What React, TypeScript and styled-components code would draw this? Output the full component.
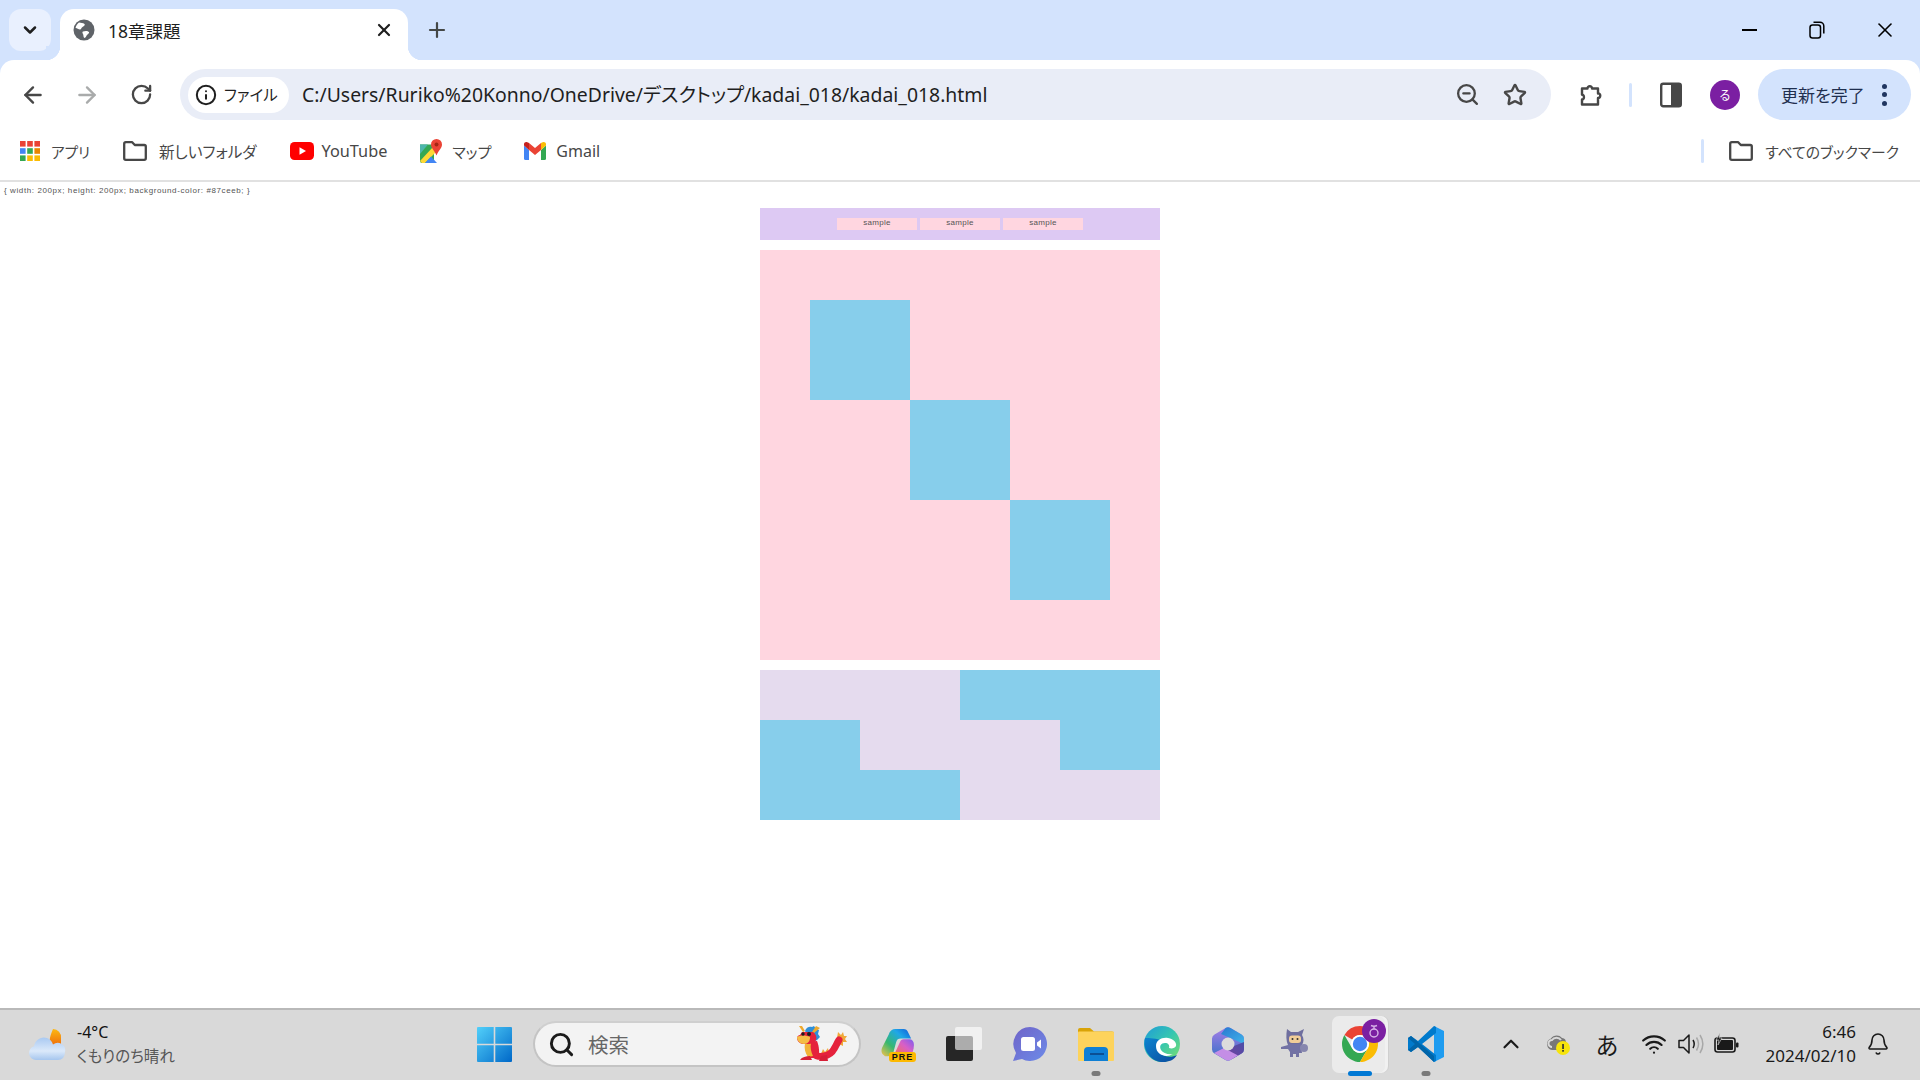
import React from 'react'
import styled, { createGlobalStyle } from 'styled-components'
import {
    ArrowLeft,
    ArrowRight,
    Bell,
    ChevronDown,
    ChevronUp,
    Info,
    Plus,
    RotateCw,
    Search,
    Star,
    Wifi,
    X,
    ZoomOut,
} from 'lucide-react'

const UI_FONT = `"Noto Sans", "Noto Sans CJK JP", sans-serif`

const GlobalStyle = createGlobalStyle`
    html, body {
        margin: 0;
        padding: 0;
        background: #ffffff;
    }
    * {
        box-sizing: border-box;
    }
`

const Screen = styled.div`
    width: 1920px;
    height: 1080px;
    display: flex;
    flex-direction: column;
    overflow: hidden;
    background: #d3e3fd;
    font-family: ${UI_FONT};
    font-feature-settings: 'palt';
`

/* ---------- tab strip ---------- */

const TabStrip = styled.div`
    height: 60px;
    display: flex;
    align-items: flex-end;
    padding-left: 9px;
    flex-shrink: 0;
`

const TabSearchButton = styled.div`
    width: 42px;
    height: 42px;
    margin-bottom: 9px;
    border-radius: 12px;
    background: #e9f0fe;
    display: flex;
    align-items: center;
    justify-content: center;
    color: #1f1f1f;
`

const Tab = styled.div`
    position: relative;
    width: 348px;
    height: 51px;
    margin-left: 9px;
    padding: 0 14px 9px 13px;
    display: flex;
    align-items: center;
    background: #ffffff;
    border-radius: 14px 14px 0 0;

    &::before,
    &::after {
        content: '';
        position: absolute;
        bottom: 0;
        width: 14px;
        height: 14px;
    }
    &::before {
        left: -14px;
        background: radial-gradient(circle at 0 0, #d3e3fd 14px, #ffffff 14.5px);
    }
    &::after {
        right: -14px;
        background: radial-gradient(circle at 100% 0, #d3e3fd 14px, #ffffff 14.5px);
    }
`

const TabTitle = styled.span`
    margin-left: 13px;
    flex: 1;
    font-size: 17.5px;
    color: #1f1f1f;
`

const NewTab = styled.div`
    width: 44px;
    height: 42px;
    margin: 0 0 9px 7px;
    display: flex;
    align-items: center;
    justify-content: center;
    color: #444746;
`

const WindowControls = styled.div`
    margin-left: auto;
    align-self: stretch;
    display: flex;
    padding-right: 1px;
`

const WindowButton = styled.div`
    width: 68px;
    display: flex;
    align-items: center;
    justify-content: center;
    color: #000000;
`

const MinimizeBar = styled.div`
    width: 15px;
    height: 2px;
    background: #000000;
`

/* ---------- toolbar ---------- */

const Toolbar = styled.div`
    height: 69px;
    flex-shrink: 0;
    display: flex;
    align-items: center;
    padding: 0 9px 0 6px;
    background: #ffffff;
    border-radius: 14px 14px 0 0;
`

const NavSlot = styled.div<{ $muted?: boolean }>`
    width: 54px;
    height: 42px;
    display: flex;
    align-items: center;
    justify-content: center;
    color: ${(p) => (p.$muted ? '#a9abab' : '#474747')};
`

const AddressBar = styled.div`
    width: 1371px;
    height: 51px;
    margin-left: 12px;
    padding: 0 12px 0 8px;
    display: flex;
    align-items: center;
    border-radius: 26px;
    background: #e9edf7;
`

const SecurityChip = styled.div`
    width: 101px;
    height: 36px;
    padding-left: 7px;
    display: flex;
    align-items: center;
    gap: 7px;
    border-radius: 18px;
    background: #ffffff;
    font-size: 15.5px;
    color: #1f1f1f;
`

const UrlText = styled.span`
    margin-left: 13px;
    padding-bottom: 2px;
    flex: 1;
    font-size: 19.4px;
    color: #1f1f1f;
    white-space: nowrap;
`

const OmniboxAction = styled.div`
    width: 48px;
    display: flex;
    justify-content: center;
    color: #474747;
`

const ToolSlot = styled.div<{ $gap: number }>`
    width: 42px;
    margin-left: ${(p) => p.$gap}px;
    display: flex;
    justify-content: center;
    color: #474747;
`

const ToolDivider = styled.div`
    width: 3px;
    height: 24px;
    margin-left: 17px;
    border-radius: 2px;
    background: #d3e3fd;
`

const Avatar = styled.div`
    width: 30px;
    height: 30px;
    margin-left: 18px;
    border-radius: 50%;
    display: flex;
    align-items: center;
    justify-content: center;
    background: #7b1fa2;
    color: #ffffff;
    font-size: 12px;
`

const UpdateButton = styled.div`
    width: 153px;
    height: 51px;
    margin-left: 18px;
    padding-left: 23px;
    display: flex;
    align-items: center;
    gap: 17px;
    border-radius: 26px;
    background: #d3e3fd;
    color: #1f2f4f;
    font-size: 17px;
`

const Dots = styled.div`
    display: flex;
    flex-direction: column;
    gap: 3.5px;

    i {
        display: block;
        width: 5px;
        height: 5px;
        border-radius: 50%;
        background: #1f3560;
    }
`

/* ---------- bookmarks ---------- */

const BookmarksBar = styled.div`
    height: 53px;
    flex-shrink: 0;
    display: flex;
    align-items: flex-start;
    gap: 33px;
    padding: 10px 21px 0 20px;
    background: #ffffff;
    border-bottom: 2px solid #e1e1e1;
`

const Bookmark = styled.div<{ $size?: number; $iconGap?: number }>`
    height: 24px;
    display: flex;
    align-items: center;
    gap: ${(p) => p.$iconGap ?? 10}px;
    font-size: ${(p) => p.$size ?? 16}px;
    color: #474747;
    white-space: nowrap;
`

const BookmarkDivider = styled.div`
    width: 3px;
    height: 24px;
    margin-left: auto;
    border-radius: 2px;
    background: #d3e3fd;
`

const AllBookmarks = styled(Bookmark)`
    margin-left: -8px;
`

/* ---------- page under test (rendered at 50% zoom) ---------- */

const Page = styled.div`
    flex: 1;
    background: #ffffff;
    padding: 0 4px;
    font-family: 'Liberation Sans', Arial, sans-serif;
    font-feature-settings: normal;
`

const CodeLine = styled.p`
    margin: 4px 0 12px;
    height: 10px;
    font-size: 8px;
    line-height: 10px;
    letter-spacing: 0.6px;
    color: #555555;
`

const Column = styled.div`
    width: 400px;
    margin: 0 auto;
    display: flex;
    flex-direction: column;
    gap: 10px;
`

const Header = styled.div`
    height: 32px;
    display: flex;
    align-items: center;
    justify-content: center;
    gap: 3px;
    background: #ddc9f3;
`

const HeaderItem = styled.div`
    width: 80px;
    height: 12px;
    background: #ffd6e0;
    text-align: center;
    font-size: 8px;
    line-height: 10px;
    letter-spacing: 0.3px;
    color: #555555;
`

const Stage = styled.div`
    height: 410px;
    padding: 50px;
    display: grid;
    grid-template-columns: repeat(3, 100px);
    grid-template-rows: repeat(3, 100px);
    background: #ffd6e0;
`

const StageBox = styled.div<{ $at: number }>`
    grid-column: ${(p) => p.$at};
    grid-row: ${(p) => p.$at};
    background: #87ceeb;
`

const Pattern = styled.div`
    height: 150px;
    display: grid;
    grid-template-columns: repeat(4, 100px);
    grid-template-rows: repeat(3, 50px);
    background: #e5dbee;
`

const PatternBlock = styled.div<{ $col: string; $row: number }>`
    grid-column: ${(p) => p.$col};
    grid-row: ${(p) => p.$row};
    background: #87ceeb;
`

/* ---------- taskbar ---------- */

const Taskbar = styled.div`
    height: 72px;
    flex-shrink: 0;
    display: flex;
    align-items: center;
    padding: 0 0 2px 29px;
    background: #d9d9d9;
    border-top: 2px solid #b9b9b9;
`

const Weather = styled.div`
    width: 448px;
    display: flex;
    align-items: center;
    gap: 11px;
`

const WeatherText = styled.div`
    display: flex;
    flex-direction: column;
    line-height: 24px;
`

const Temperature = styled.span`
    font-size: 16px;
    color: #111111;
`

const Condition = styled.span`
    font-size: 15.5px;
    color: #555555;
`

const SearchPill = styled.div`
    width: 328px;
    height: 46px;
    margin-left: 21px;
    padding: 0 12px 0 13px;
    display: flex;
    align-items: center;
    border-radius: 23px;
    background: #f3f3f3;
    border: 2px solid #c4c4c4;
    border-top-color: #cfcfcf;
    color: #1b1b1b;
`

const SearchLabel = styled.span`
    margin-left: 13px;
    flex: 1;
    font-size: 20.5px;
    color: #666666;
`

const Apps = styled.div`
    margin-left: 4px;
    display: flex;
    align-self: stretch;
`

const AppSlot = styled.div`
    position: relative;
    isolation: isolate;
    width: 66px;
    display: flex;
    align-items: center;
    justify-content: center;
`

const ChromeTile = styled.div`
    position: absolute;
    z-index: -1;
    top: 6px;
    left: 5px;
    width: 53px;
    height: 57px;
    border-radius: 7px;
    background: #ebebeb;
    box-shadow: 3px 0 0 0 #f1f1f1, 4px 0 0 0 #cfcfcf;
`

const RunningDot = styled.div<{ $active?: boolean }>`
    position: absolute;
    bottom: 2px;
    left: 50%;
    transform: translateX(-50%);
    height: 5px;
    width: ${(p) => (p.$active ? 24 : 9)}px;
    border-radius: 3px;
    background: ${(p) => (p.$active ? '#0078d4' : '#7a7a7a')};
`

const ChromeBadge = styled.div`
    position: absolute;
    top: 9px;
    left: 35px;
    width: 24px;
    height: 24px;
    border-radius: 50%;
    background: #7b1fa2;
    display: flex;
    align-items: center;
    justify-content: center;
`

const PreBadge = styled.span`
    position: absolute;
    left: 24px;
    top: 42px;
    width: 27px;
    height: 10px;
    border-radius: 3px;
    background: #fdb900;
    color: #111111;
    font-family: 'Liberation Sans', Arial, sans-serif;
    font-size: 9px;
    font-weight: 700;
    letter-spacing: 1px;
    line-height: 10px;
    text-align: center;
`

const Tray = styled.div`
    margin-left: auto;
    display: flex;
    align-items: center;
    padding-right: 20px;
    color: #1a1a1a;
`

const TrayIcon = styled.div<{ $width: number }>`
    width: ${(p) => p.$width}px;
    display: flex;
    align-items: center;
    justify-content: center;
    font-size: 23px;
`

const Clock = styled.div`
    width: 109px;
    text-align: right;
    font-size: 17px;
    line-height: 24px;
    color: #1a1a1a;
`

const BellSlot = styled.div`
    width: 44px;
    display: flex;
    justify-content: center;
`

/* ---------- drawings ---------- */

const GlobeIcon = () => (
    <svg width="22" height="22" viewBox="0 0 22 22">
        <circle cx="11" cy="11" r="10.5" fill="#5f6368" />
        <path d="M6 3.5c2 .6 4 .2 5.5 1.5 1 1-1 2.5-2 3-1.500.7-1 2.500-2.500 2.500-1.500 0-3-1.500-4.500-1.800C3 6.800 4.500 4.500 6 3.500z" fill="#fff" />
        <path d="M10 12.500c2-.8 5-.8 6 .6 .6 1-1 2-2 3-.8.9-1 2.800-2.500 2.900-1 0-1-2.500-1.300-3.500-.3-1-1.500-2.300-.2-3z" fill="#fff" />
    </svg>
)

const ExtensionIcon = () => (
    <svg width="26" height="26" viewBox="0 0 26 26" fill="none" stroke="#474747" strokeWidth="2.4" strokeLinejoin="round">
        <path d="M4 6.500h5.500c-.4-3 5-3 4.500 0H20v5c3-.4 3 4.500 0 4.500v6.500H4v-5c2.600.3 2.600-5 0-4.800z" />
    </svg>
)

const SidePanelIcon = () => (
    <svg width="22" height="26" viewBox="0 0 22 26">
        <rect x="1.2" y="1.7" width="19.6" height="22.6" rx="2" fill="#fff" stroke="#474747" strokeWidth="2.4" />
        <rect x="11" y="1.7" width="10" height="22.6" rx="1" fill="#474747" />
    </svg>
)

const RestoreIcon = () => (
    <svg width="16" height="18" viewBox="0 0 16 18" fill="none" stroke="#000" strokeWidth="1.5">
        <rect x="1" y="4" width="10.5" height="13" rx="2.5" />
        <path d="M4.500 1.200h6.500c2 0 3.800 1.600 3.800 3.800v7.500" />
    </svg>
)

const AppsGridIcon = () => {
    const colors = ['#ea4335', '#ea4335', '#ea4335', '#4285f4', '#34a853', '#ea8600', '#34a853', '#fbbc04', '#fbbc04']
    return (
        <svg width="20" height="20" viewBox="0 0 20 20">
            {colors.map((c, i) => (
                <rect key={i} x={(i % 3) * 7.2} y={Math.floor(i / 3) * 7.2} width="5.6" height="5.6" fill={c} />
            ))}
        </svg>
    )
}

const FolderIcon = () => (
    <svg width="24" height="20" viewBox="0 0 24 20" fill="none" stroke="#474747" strokeWidth="2.3" strokeLinejoin="round">
        <path d="M2.800 1.200h6.400l2.600 2.800h9.400c.9 0 1.600.7 1.600 1.600v11.600c0 .9-.7 1.600-1.600 1.600H2.800c-.9 0-1.600-.7-1.600-1.600V2.800c0-.9.7-1.600 1.600-1.600z" />
    </svg>
)

const YouTubeIcon = () => (
    <svg width="24" height="18" viewBox="0 0 24 18">
        <rect width="24" height="18" rx="4.5" fill="#f00" />
        <path d="M9.500 5.200l6.500 3.800-6.500 3.800z" fill="#fff" />
    </svg>
)

const MapsIcon = () => (
    <svg width="22" height="24" viewBox="0 0 22 24">
        <path d="M0 5.500h14V24H2a2 2 0 0 1-2-2z" fill="#34a853" />
        <path d="M0 5.500h8L0 15z" fill="#4db6ac" />
        <path d="M0 22L13 8l4 4-12 12H2z" fill="#fdd835" />
        <path d="M5 24l6-6.500L17 24z" fill="#4285f4" />
        <path d="M16.500 0a5.500 5.500 0 0 1 5.500 5.500c0 4-4 6.500-5.500 11-1.500-4.500-5.500-7-5.500-11A5.500 5.500 0 0 1 16.500 0z" fill="#ea4335" />
        <circle cx="16.5" cy="5.5" r="2" fill="#a52714" />
    </svg>
)

const GmailIcon = () => (
    <svg width="22" height="18" viewBox="0 0 22 18">
        <path d="M0 3.500V16.500A1.500 1.500 0 0 0 1.500 18H5V8z" fill="#4285f4" />
        <path d="M17 8V18h3.500a1.500 1.500 0 0 0 1.500-1.500V3.500z" fill="#34a853" />
        <path d="M17 1v7l5-4.500V2C22 .2 19.500-.6 18 .5z" fill="#fbbc04" />
        <path d="M5 8V1l6 5 6-5v7l-6 5z" fill="#ea4335" />
        <path d="M0 2v1.500L5 8V1L4 .5C2.500-.6 0 .2 0 2z" fill="#c5221f" />
    </svg>
)

const WeatherIcon = () => (
    <svg width="37" height="36" viewBox="0 0 37 36">
        <defs>
            <linearGradient id="wxSun" x1="0" y1="0" x2="0" y2="1">
                <stop offset="0" stopColor="#fcb813" />
                <stop offset="1" stopColor="#ee6c0c" />
            </linearGradient>
            <linearGradient id="wxCloud" x1="0" y1="0" x2="0" y2="1">
                <stop offset="0" stopColor="#a9c9f2" />
                <stop offset="0.6" stopColor="#dbe9fa" />
                <stop offset="1" stopColor="#a6c6ee" />
            </linearGradient>
        </defs>
        <path d="M24 3a8 8 0 0 1 8 9v8H22c-2-3-2-8 2-17z" fill="url(#wxSun)" />
        <path d="M7 34a7 7 0 0 1-2-13.700C6 14 12 10 18 12c3 1 5 3.500 6 6.500A7.500 7.500 0 0 1 36 26c0 5-3 8-7 8z" fill="url(#wxCloud)" />
    </svg>
)

const WindowsLogo = () => (
    <svg width="35" height="35" viewBox="0 0 35 35">
        <defs>
            <linearGradient id="winLogo" x1="0" y1="0" x2="1" y2="1">
                <stop offset="0" stopColor="#52d0fa" />
                <stop offset="1" stopColor="#0068c8" />
            </linearGradient>
        </defs>
        <path d="M1 0h15.700v16.700H0V1a1 1 0 0 1 1-1zM18.300 0H34a1 1 0 0 1 1 1v15.700H18.300zM0 18.300h16.700V35H1a1 1 0 0 1-1-1zM18.300 18.300H35V34a1 1 0 0 1-1 1H18.300z" fill="url(#winLogo)" />
    </svg>
)

const DragonIcon = () => (
    <svg width="50" height="36" viewBox="0 0 50 36">
        {/* gold fins along the tail */}
        <path d="M40 12l1-6 3 3 2-3 1 4 3 0-2 3 2 3-4 0 0 4-4-2z" fill="#f0a83a" />
        <path d="M24 28l2-5 2 3 3-4 1 5z" fill="#f0a83a" />
        {/* body and tail */}
        <path d="M14 24c2 6 8 7 13 6 5-1 8-3 10-7 2-3 3-6 5-9" fill="none" stroke="#e5223c" strokeWidth="7" strokeLinecap="round" />
        <path d="M9 16c-1 6 0 12 4 16h8c2-5 1-12-1-17z" fill="#e5223c" />
        <path d="M8 17c-1 5 0 10 3 14l5-1c-2-4-3-9-2-13z" fill="#f2b338" />
        {/* feet */}
        <path d="M3 34c2-3 6-4 10-4l2 4zM22 35l2-5 6-1 1 6z" fill="#d61f36" />
        {/* mane and horns */}
        <path d="M8 5c1-4 5-5 7-4l2-1 2 3 3 1-1 4 2 3-3 3-4 2-5-6z" fill="#2f8fd8" />
        <path d="M2 0l4 6 2-1-3-5zM19 0l-4 6 2 1 6-5z" fill="#eda92e" />
        {/* head */}
        <path d="M5 6h11c3 2 4 5 3 8-1 3-4 4-8 4H5c-3-1-5-3-5-6 0-2 2-3 3-3z" fill="#e5223c" />
        <path d="M0 11c3-2 9-2 13 0 0 4-2 7-6 7s-7-3-7-7z" fill="#f4bd45" />
        <circle cx="12" cy="8" r="2" fill="#1e1e1e" />
        <circle cx="6" cy="8" r="1.700" fill="#1e1e1e" />
    </svg>
)

const CopilotIcon = () => (
    <svg width="34" height="30" viewBox="0 0 36 32">
        <defs>
            <linearGradient id="cpA" x1="0" y1="1" x2="1" y2="0">
                <stop offset="0" stopColor="#f7c14a" />
                <stop offset=".35" stopColor="#37b86f" />
                <stop offset=".7" stopColor="#1fa7e8" />
                <stop offset="1" stopColor="#1058d8" />
            </linearGradient>
            <linearGradient id="cpB" x1="0" y1="1" x2="1" y2="0">
                <stop offset="0" stopColor="#f2734f" />
                <stop offset=".55" stopColor="#d95fc6" />
                <stop offset="1" stopColor="#7a5cf0" />
            </linearGradient>
        </defs>
        <path d="M8 6c1-4 4-6 7-6h9c2 0 4 1 5 4l3 6H21c-3 0-4 1-5 4l-3 11c-1 3-3 4-6 4H4l-1-1C0 26 0 23 1 20z" fill="url(#cpA)" />
        <path d="M20 14c1-2 2-3 4-3h6c3 0 5 2 5 6 0 5-2 9-3 11H18c-2 0-3-1-3-3z" fill="url(#cpB)" />
    </svg>
)

const TaskViewIcon = () => (
    <svg width="36" height="34" viewBox="0 0 36 34">
        <rect x="0" y="9" width="27" height="25" rx="2" fill="#262626" />
        <rect x="9" y="0" width="27" height="23" rx="2" fill="#fff" fillOpacity=".62" />
    </svg>
)

const MeetIcon = () => (
    <svg width="34" height="34" viewBox="0 0 34 34">
        <defs>
            <linearGradient id="meet" x1="0" y1="0" x2="1" y2="1">
                <stop offset="0" stopColor="#6f63c8" />
                <stop offset="1" stopColor="#6d8be8" />
            </linearGradient>
        </defs>
        <path d="M17 0a17 17 0 1 1-8 32l-9 2 3-8A17 17 0 0 1 17 0z" fill="url(#meet)" />
        <rect x="8" y="10" width="14" height="14" rx="2.5" fill="#fff" />
        <path d="M24 15.500l4-3v9l-4-3z" fill="#fff" />
    </svg>
)

const ExplorerIcon = () => (
    <svg width="36" height="34" viewBox="0 0 36 34">
        <path d="M2 1h10l4 3.500h18a2 2 0 0 1 2 2V10H0V3a2 2 0 0 1 2-2z" fill="#d9a307" />
        <rect y="4.5" width="36" height="29.5" rx="1" fill="#fdd35c" />
        <path d="M6 34V24a4 4 0 0 1 4-4h16a4 4 0 0 1 4 4v10z" fill="#0f7fd4" />
        <rect x="12" y="26" width="14" height="2" fill="#0b4f94" />
    </svg>
)

const EdgeIcon = () => (
    <svg width="36" height="36" viewBox="0 0 36 36">
        <defs>
            <linearGradient id="edgeA" x1="0" y1="0" x2="1" y2="1">
                <stop offset="0" stopColor="#1f9cd8" />
                <stop offset=".5" stopColor="#35c6b0" />
                <stop offset="1" stopColor="#7ee06a" />
            </linearGradient>
            <linearGradient id="edgeB" x1="0" y1="0" x2="1" y2="1">
                <stop offset="0" stopColor="#0c84d0" />
                <stop offset="1" stopColor="#0b4a9c" />
            </linearGradient>
        </defs>
        <circle cx="18" cy="18" r="18" fill="url(#edgeA)" />
        <path d="M1 12c-3 12 6 24 18 24 6 0 11-2 14-7-6 3-13 2-17-2-4-4-3-10 2-12-5-3-13-3-17-3z" fill="url(#edgeB)" />
        <path d="M12 20c0-6 6-9 12-8 6 1 9 5 8 8-1 2-4 3-7 2 1-3-1-5-4-5-4 0-6 3-4 7 2 3 7 5 12 4-5 3-10 2-13 0-3-2-4-5-4-8z" fill="#fff" />
    </svg>
)

const M365Icon = () => (
    <svg width="32" height="34" viewBox="0 0 32 34">
        <defs>
            <linearGradient id="m365L" x1="0" y1="0" x2="0" y2="1">
                <stop offset="0" stopColor="#a87fe8" />
                <stop offset="1" stopColor="#2f6fc4" />
            </linearGradient>
            <linearGradient id="m365T" x1="0" y1="0" x2="1" y2="1">
                <stop offset="0" stopColor="#2a78d0" />
                <stop offset="1" stopColor="#3fb4ea" />
            </linearGradient>
            <linearGradient id="m365R" x1="1" y1="0" x2="0" y2="1">
                <stop offset="0" stopColor="#4a4fa8" />
                <stop offset="1" stopColor="#7a3f9c" />
            </linearGradient>
        </defs>
        <path d="M13.500 1a5 5 0 0 1 5 0L29.500 7.500A5 5 0 0 1 32 12V22a5 5 0 0 1-2.500 4.500L18.500 33a5 5 0 0 1-5 0L2.500 26.500A5 5 0 0 1 0 22V12a5 5 0 0 1 2.500-4.500z" fill="url(#m365L)" />
        <path d="M13.500 1a5 5 0 0 1 5 0L29.500 7.500A5 5 0 0 1 32 12V17L16 10 9 7z" fill="url(#m365T)" />
        <path d="M32 15V22a5 5 0 0 1-2.500 4.500L20 32l-9-8 11-5z" fill="url(#m365R)" />
        <path d="M2 26l11.500 7a5 5 0 0 0 5 0L26 28.500 12 21z" fill="#c48ee6" />
        <circle cx="16" cy="17" r="6.500" fill="#dcdcdc" />
    </svg>
)

const NinjaIcon = () => (
    <svg width="28" height="30" viewBox="0 0 28 30">
        <path d="M7 0l4 3h7l6-3-2 6c2 3 2 7 0 10H8C6 12 6 6 7 0z" fill="#6e6e9e" />
        <rect x="9" y="6.500" width="12" height="7.500" rx="3" fill="#f0cd98" />
        <circle cx="12.500" cy="10" r="1" fill="#333" />
        <circle cx="17.500" cy="10" r="1" fill="#333" />
        <path d="M9 15h12l1 9h-3v4h-3v-3h-3v3H10v-5L8 20l-7 0v-2l7-2z" fill="#7272a4" />
        <circle cx="24" cy="19" r="4" fill="#8686ae" />
    </svg>
)

const ChromeIcon = () => (
    <svg width="36" height="36" viewBox="4 4 40 40">
        <path d="M24 4A20 20 0 0 1 41.320 14H24A10 10 0 0 0 15.340 19L6.680 14A20 20 0 0 1 24 4Z" fill="#ea4335" />
        <path d="M6.680 14A20 20 0 0 0 24 44L32.660 29A10 10 0 0 1 15.340 29Z" fill="#34a853" />
        <path d="M41.320 14H24A10 10 0 0 1 32.660 29L24 44A20 20 0 0 0 41.320 14Z" fill="#fbbc04" />
        <circle cx="24" cy="24" r="10" fill="#fff" />
        <circle cx="24" cy="24" r="8" fill="#4285f4" />
    </svg>
)

const BadgeGlyph = () => (
    <svg width="12" height="14" viewBox="0 0 12 14" fill="none" stroke="#d8b4e8" strokeWidth="1.4">
        <path d="M3 1.500c2 1 4 1 6 0M6 2v3" />
        <circle cx="6" cy="9" r="4" />
    </svg>
)

const VSCodeIcon = () => (
    <svg width="36" height="36" viewBox="0 0 36 36">
        <path d="M26 0l10 5v26l-10 5z" fill="#1f9cf0" />
        <path d="M26 0L10 15 3 10l-3 2v12l3 2 7-5 16 15 2-1V29L14 18 28 7V1z" fill="#007acc" />
        <path d="M0 12l3-2 23 20v6L10 21l-7 5-3-2 7-6z" fill="#0065a9" />
    </svg>
)

const OneDriveAlert = () => (
    <svg width="26" height="24" viewBox="0 0 26 24">
        <path d="M7 18a6 6 0 0 1-1-11.500C8 3 14 2 17 6c3 .5 4 2 4 5-1 4-3 7-7 7z" fill="#777" />
        <path d="M7 15a3.500 3.500 0 0 1 0-7c2-3 7-3 9 0" fill="none" stroke="#d9d9d9" strokeWidth="2" />
        <circle cx="18" cy="16" r="7" fill="#f6e40c" />
        <rect x="17.2" y="12" width="1.7" height="5" fill="#333" />
        <rect x="17.2" y="18" width="1.7" height="1.7" fill="#333" />
    </svg>
)

const VolumeIcon = () => (
    <svg width="26" height="22" viewBox="0 0 26 22" fill="none" strokeWidth="1.5">
        <path d="M1 7.500h4.500L11 2v18l-5.500-5.500H1z" stroke="#1a1a1a" strokeLinejoin="round" />
        <path d="M15 7c1.500 2.500 1.500 5.500 0 8" stroke="#1a1a1a" />
        <path d="M18.500 4.500c2.500 4 2.500 9 0 13M22 2c3.500 5.500 3.500 12.500 0 18" stroke="#a8a8a8" />
    </svg>
)

const BatteryIcon = () => (
    <svg width="25" height="22" viewBox="0 0 25 22">
        <rect x="1" y="5" width="20" height="14" rx="2.5" fill="none" stroke="#1a1a1a" strokeWidth="1.6" />
        <rect x="3" y="7" width="16" height="10" rx="1" fill="#1a1a1a" />
        <rect x="22" y="9.5" width="2.5" height="5" rx="1" fill="#1a1a1a" />
        <path d="M6 0L2 7h3l-1 5 4-7H5z" fill="#1a1a1a" stroke="#d9d9d9" strokeWidth=".6" />
    </svg>
)

export default function App() {
    return (
        <>
            <GlobalStyle />
            <Screen>
                <TabStrip>
                    <TabSearchButton>
                        <ChevronDown size={20} strokeWidth={3} />
                    </TabSearchButton>
                    <Tab>
                        <GlobeIcon />
                        <TabTitle>18章課題</TabTitle>
                        <X size={20} strokeWidth={2.6} color="#1f1f1f" />
                    </Tab>
                    <NewTab>
                        <Plus size={24} strokeWidth={2.2} />
                    </NewTab>
                    <WindowControls>
                        <WindowButton>
                            <MinimizeBar />
                        </WindowButton>
                        <WindowButton>
                            <RestoreIcon />
                        </WindowButton>
                        <WindowButton>
                            <X size={24} strokeWidth={1.6} />
                        </WindowButton>
                    </WindowControls>
                </TabStrip>

                <Toolbar>
                    <NavSlot>
                        <ArrowLeft size={26} strokeWidth={2.2} />
                    </NavSlot>
                    <NavSlot $muted>
                        <ArrowRight size={26} strokeWidth={2.2} />
                    </NavSlot>
                    <NavSlot>
                        <RotateCw size={23} strokeWidth={2.4} />
                    </NavSlot>
                    <AddressBar>
                        <SecurityChip>
                            <Info size={22} strokeWidth={2.2} color="#1f1f1f" />
                            ファイル
                        </SecurityChip>
                        <UrlText>C:/Users/Ruriko%20Konno/OneDrive/デスクトップ/kadai_018/kadai_018.html</UrlText>
                        <OmniboxAction>
                            <ZoomOut size={25} strokeWidth={2.2} />
                        </OmniboxAction>
                        <OmniboxAction>
                            <Star size={24} strokeWidth={2.4} />
                        </OmniboxAction>
                    </AddressBar>
                    <ToolSlot $gap={19}>
                        <ExtensionIcon />
                    </ToolSlot>
                    <ToolDivider />
                    <ToolSlot $gap={18}>
                        <SidePanelIcon />
                    </ToolSlot>
                    <Avatar>る</Avatar>
                    <UpdateButton>
                        更新を完了
                        <Dots>
                            <i />
                            <i />
                            <i />
                        </Dots>
                    </UpdateButton>
                </Toolbar>

                <BookmarksBar>
                    <Bookmark $size={14.6} $iconGap={11}>
                        <AppsGridIcon />
                        アプリ
                    </Bookmark>
                    <Bookmark $size={15.6} $iconGap={12}>
                        <FolderIcon />
                        新しいフォルダ
                    </Bookmark>
                    <Bookmark $size={16.3} $iconGap={8}>
                        <YouTubeIcon />
                        YouTube
                    </Bookmark>
                    <Bookmark $size={15}>
                        <MapsIcon />
                        マップ
                    </Bookmark>
                    <Bookmark>
                        <GmailIcon />
                        Gmail
                    </Bookmark>
                    <BookmarkDivider />
                    <AllBookmarks $size={14.8} $iconGap={12}>
                        <FolderIcon />
                        すべてのブックマーク
                    </AllBookmarks>
                </BookmarksBar>

                <Page>
                    <CodeLine>{'{ width: 200px; height: 200px; background-color: #87ceeb; }'}</CodeLine>
                    <Column>
                        <Header>
                            <HeaderItem>sample</HeaderItem>
                            <HeaderItem>sample</HeaderItem>
                            <HeaderItem>sample</HeaderItem>
                        </Header>
                        <Stage>
                            <StageBox $at={1} />
                            <StageBox $at={2} />
                            <StageBox $at={3} />
                        </Stage>
                        <Pattern>
                            <PatternBlock $col="3 / 5" $row={1} />
                            <PatternBlock $col="1" $row={2} />
                            <PatternBlock $col="4" $row={2} />
                            <PatternBlock $col="1 / 3" $row={3} />
                        </Pattern>
                    </Column>
                </Page>

                <Taskbar>
                    <Weather>
                        <WeatherIcon />
                        <WeatherText>
                            <Temperature>-4°C</Temperature>
                            <Condition>くもりのち晴れ</Condition>
                        </WeatherText>
                    </Weather>
                    <WindowsLogo />
                    <SearchPill>
                        <Search size={27} strokeWidth={2.6} />
                        <SearchLabel>検索</SearchLabel>
                        <DragonIcon />
                    </SearchPill>
                    <Apps>
                        <AppSlot>
                            <CopilotIcon />
                            <PreBadge>PRE</PreBadge>
                        </AppSlot>
                        <AppSlot>
                            <TaskViewIcon />
                        </AppSlot>
                        <AppSlot>
                            <MeetIcon />
                        </AppSlot>
                        <AppSlot>
                            <ExplorerIcon />
                            <RunningDot />
                        </AppSlot>
                        <AppSlot>
                            <EdgeIcon />
                        </AppSlot>
                        <AppSlot>
                            <M365Icon />
                        </AppSlot>
                        <AppSlot>
                            <NinjaIcon />
                        </AppSlot>
                        <AppSlot>
                            <ChromeTile />
                            <ChromeIcon />
                            <ChromeBadge>
                                <BadgeGlyph />
                            </ChromeBadge>
                            <RunningDot $active />
                        </AppSlot>
                        <AppSlot>
                            <VSCodeIcon />
                            <RunningDot />
                        </AppSlot>
                    </Apps>
                    <Tray>
                        <TrayIcon $width={44}>
                            <ChevronUp size={26} strokeWidth={2} />
                        </TrayIcon>
                        <TrayIcon $width={50}>
                            <OneDriveAlert />
                        </TrayIcon>
                        <TrayIcon $width={48}>あ</TrayIcon>
                        <TrayIcon $width={46}>
                            <Wifi size={26} strokeWidth={2} />
                        </TrayIcon>
                        <TrayIcon $width={28}>
                            <VolumeIcon />
                        </TrayIcon>
                        <TrayIcon $width={42}>
                            <BatteryIcon />
                        </TrayIcon>
                        <Clock>
                            6:46
                            <br />
                            2024/02/10
                        </Clock>
                        <BellSlot>
                            <Bell size={24} strokeWidth={1.6} />
                        </BellSlot>
                    </Tray>
                </Taskbar>
            </Screen>
        </>
    )
}
